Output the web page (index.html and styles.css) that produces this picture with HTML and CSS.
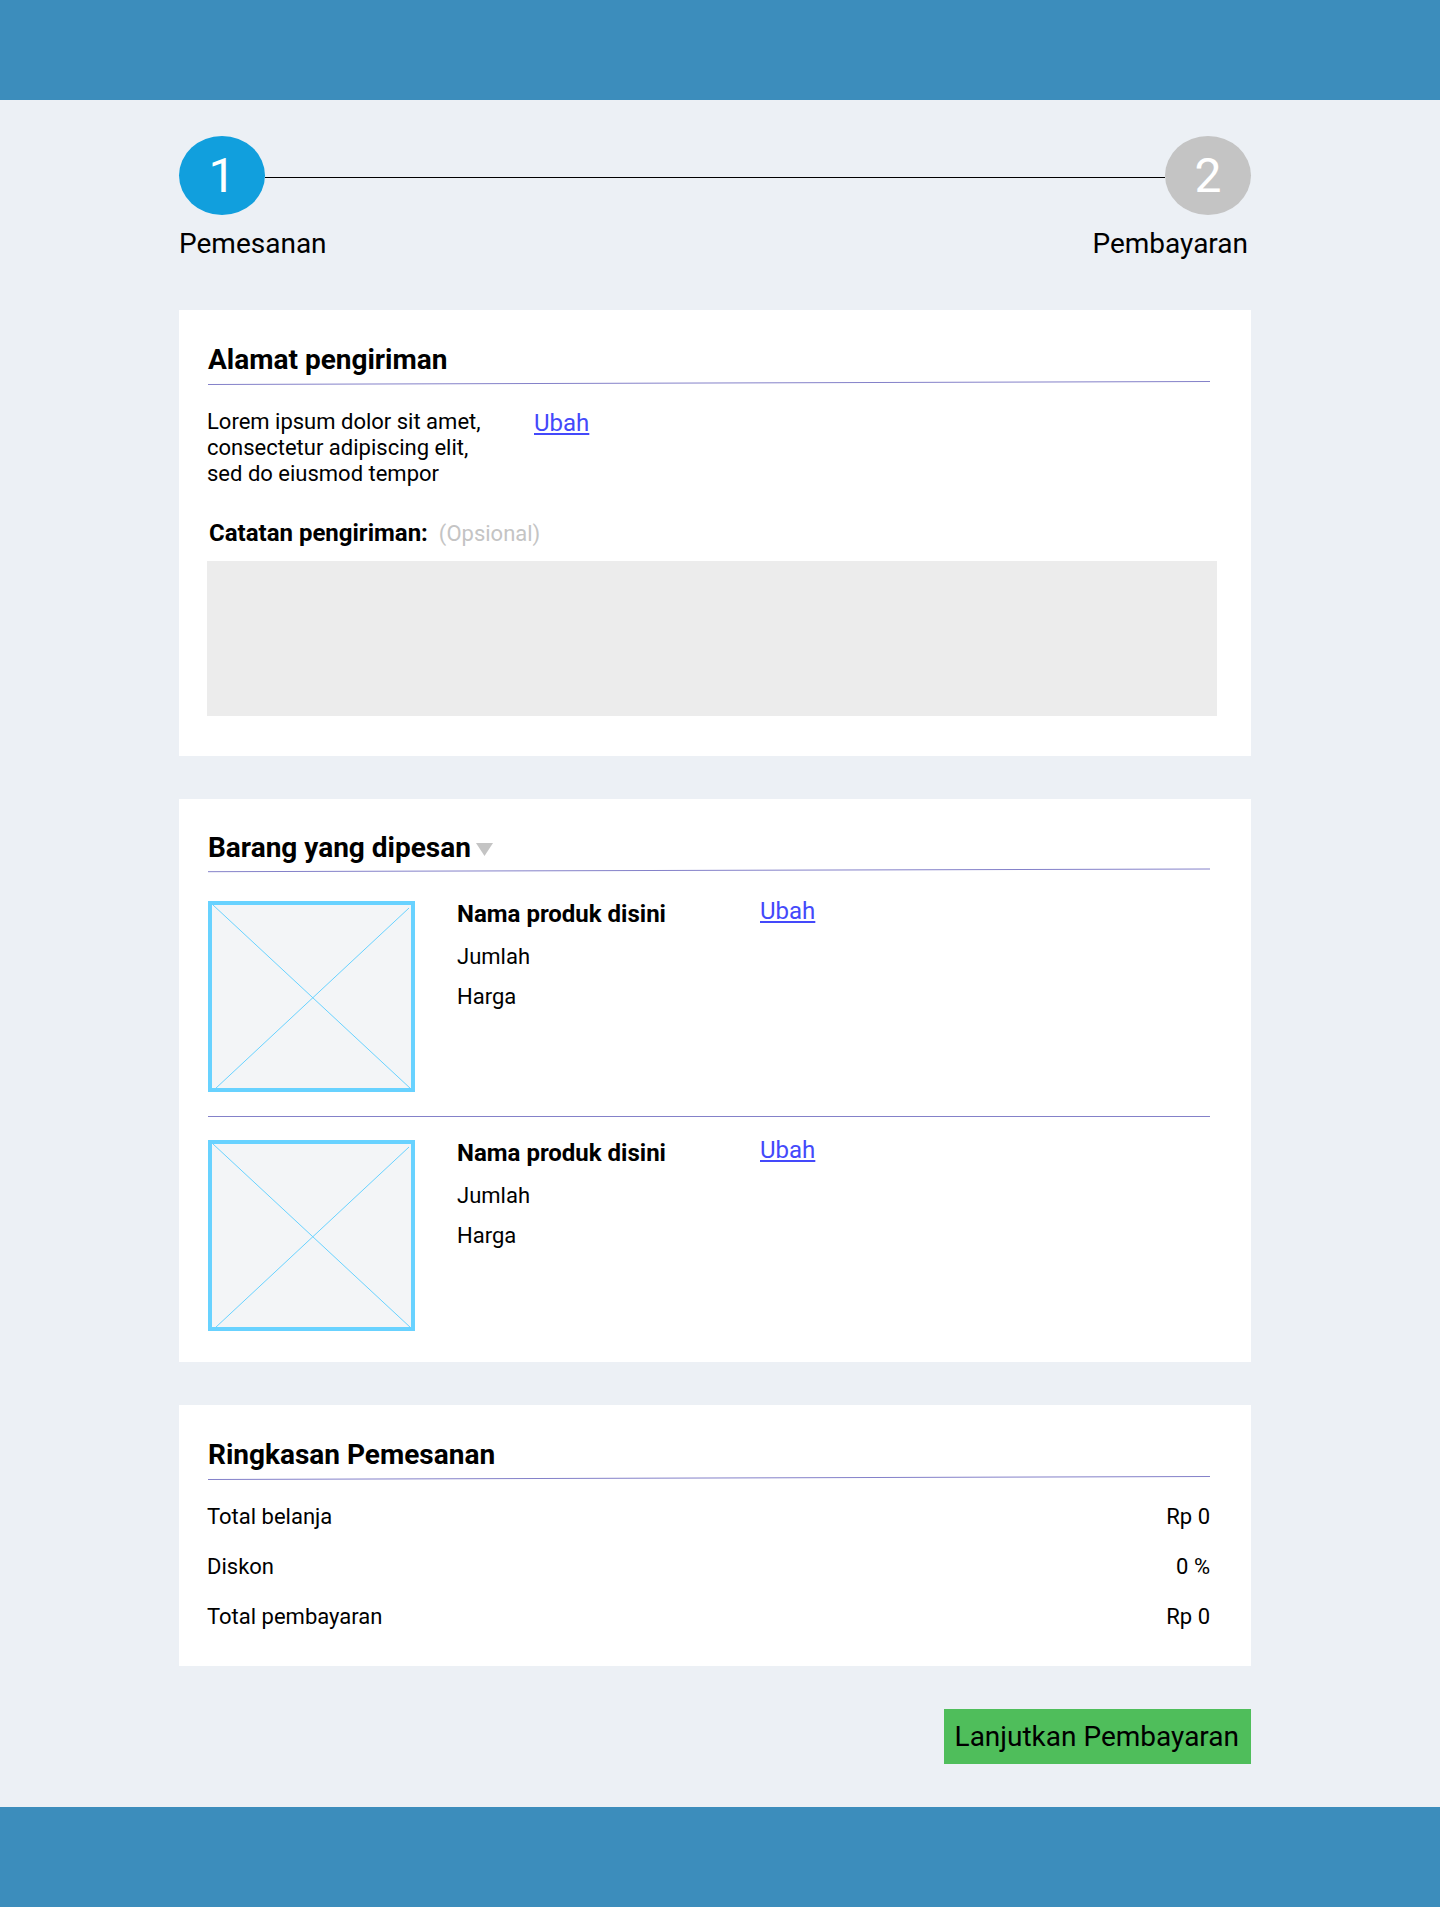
FILE: index.html
```html
<!DOCTYPE html>
<html lang="id">
<head>
  <meta charset="utf-8">
  <meta name="viewport" content="width=device-width, initial-scale=1">
  <title>Pemesanan</title>
  <link rel="stylesheet" href="styles.css">
</head>
<body>
  <header class="bar"></header>

  <main class="page">
    <ol class="stepper">
      <li class="step step-first">
        <div class="step-track">
          <span class="step-number step-active">1</span>
          <span class="step-line"></span>
        </div>
        <span class="step-label">Pemesanan</span>
      </li>
      <li class="step step-last">
        <div class="step-track">
          <span class="step-line"></span>
          <span class="step-number">2</span>
        </div>
        <span class="step-label">Pembayaran</span>
      </li>
    </ol>

    <section class="card card-address">
      <h2 class="card-title">Alamat pengiriman</h2>
      <svg class="rule" viewBox="0 0 1002 5" preserveAspectRatio="none" aria-hidden="true"><line x1="0" y1="4.5" x2="1002" y2="1.5"/></svg>
      <div class="address">
        <p class="address-text">Lorem ipsum dolor sit amet,<br>consectetur adipiscing elit,<br>sed do eiusmod tempor</p>
        <a class="edit" href="#alamat">Ubah</a>
      </div>
      <label class="note-label" for="catatan">Catatan pengiriman: <span class="note-hint">(Opsional)</span></label>
      <textarea class="note" id="catatan"></textarea>
    </section>

    <section class="card card-items">
      <h2 class="card-title">Barang yang dipesan
        <button class="toggle" type="button" aria-label="Tampilkan barang">
          <svg width="17" height="13" viewBox="0 0 17 13" aria-hidden="true"><path d="M0 0H17L8.5 13Z"/></svg>
        </button>
      </h2>
      <svg class="rule" viewBox="0 0 1002 5" preserveAspectRatio="none" aria-hidden="true"><line x1="0" y1="3.7" x2="1002" y2="1"/></svg>
      <ul class="items">
        <li class="item">
          <svg class="thumb" viewBox="0 0 207 191" aria-hidden="true"><rect x="2" y="2" width="203" height="187"/><path d="M5 4L203 188M201 7L7 188"/></svg>
          <div class="details">
            <h3 class="item-name">Nama produk disini</h3>
            <p>Jumlah</p>
            <p>Harga</p>
          </div>
          <a class="edit" href="#produk-1">Ubah</a>
        </li>
        <li class="item">
          <svg class="thumb" viewBox="0 0 207 191" aria-hidden="true"><rect x="2" y="2" width="203" height="187"/><path d="M5 4L203 188M201 7L7 188"/></svg>
          <div class="details">
            <h3 class="item-name">Nama produk disini</h3>
            <p>Jumlah</p>
            <p>Harga</p>
          </div>
          <a class="edit" href="#produk-2">Ubah</a>
        </li>
      </ul>
    </section>

    <section class="card card-summary">
      <h2 class="card-title">Ringkasan Pemesanan</h2>
      <svg class="rule" viewBox="0 0 1002 5" preserveAspectRatio="none" aria-hidden="true"><line x1="0" y1="4.5" x2="1002" y2="1.5"/></svg>
      <dl class="summary">
        <div class="summary-row"><dt>Total belanja</dt><dd>Rp 0</dd></div>
        <div class="summary-row"><dt>Diskon</dt><dd>0 %</dd></div>
        <div class="summary-row"><dt>Total pembayaran</dt><dd>Rp 0</dd></div>
      </dl>
    </section>

    <button class="submit" type="button">Lanjutkan Pembayaran</button>
  </main>

  <footer class="bar"></footer>
</body>
</html>
```
FILE: styles.css
```css
* {
  box-sizing: border-box;
}

body {
  margin: 0;
  background: #ecf0f5;
  color: #000;
  font-family: Roboto, "Liberation Sans", sans-serif;
  font-size: 22px;
  line-height: 26px;
}

h2, h3, p, ol, ul, dl, dd {
  margin: 0;
  padding: 0;
}

ol, ul {
  list-style: none;
}

.bar {
  height: 100px;
  background: #3c8dbc;
}

.page {
  display: flex;
  flex-direction: column;
  gap: 43px;
  padding: 36px 189px 43px 179px;
}

/* Progress steps */
.stepper {
  display: flex;
  margin-bottom: 7px;
}

.step-first {
  flex: 1;
}

.step-track {
  display: flex;
  align-items: center;
  margin-bottom: 12px;
}

.step-number {
  display: flex;
  align-items: center;
  justify-content: center;
  width: 86px;
  height: 79px;
  border-radius: 50%;
  background: #c4c4c4;
  color: #fff;
  font-size: 48px;
  line-height: 56px;
}

.step-active {
  background: #119fdd;
}

.step-line {
  flex: 1;
  height: 1px;
  margin-top: 4px;
  background: #000;
}

.step-label {
  display: block;
  font-size: 28px;
  line-height: 33px;
}

.step-last .step-label {
  padding-right: 3px;
}

/* Cards */
.card {
  padding: 33px 34px 40px 28px;
  background: #fff;
}

.card-items {
  padding-top: 32px;
  padding-bottom: 31px;
}

.card-summary {
  padding-bottom: 36px;
}

.card-title {
  display: flex;
  align-items: center;
  gap: 5px;
  padding-left: 1px;
  font-size: 28px;
  font-weight: 700;
  line-height: 33px;
}

.rule {
  display: block;
  width: calc(100% - 8px);
  height: 5px;
  margin: 4px 7px 24px 1px;
  stroke: #8481c9;
}

.edit {
  color: #4449fb;
  font-size: 24px;
  line-height: 28px;
}

/* Shipping address */
.address {
  display: flex;
  margin-bottom: 32px;
}

.address-text {
  width: 327px;
}

.note-label {
  display: flex;
  align-items: baseline;
  gap: 11px;
  margin-bottom: 13px;
  padding-left: 2px;
  font-size: 24px;
  font-weight: 700;
  line-height: 28px;
}

.note-hint {
  color: #c4c4c4;
  font-size: 22px;
  font-weight: 400;
}

.note {
  display: block;
  width: 100%;
  height: 155px;
  padding: 12px;
  border: 0;
  background: #ececec;
  font: inherit;
  resize: none;
}

/* Ordered items */
.toggle {
  display: flex;
  margin-top: 4px;
  padding: 0;
  border: 0;
  background: none;
  fill: #c4c4c4;
}

.items {
  margin: 28px 7px 0 1px;
}

.card-items .rule {
  margin-bottom: 0;
}

.item {
  display: flex;
}

.item + .item {
  margin-top: 24px;
  padding-top: 23px;
  border-top: 1px solid #8481c9;
}

.thumb {
  width: 207px;
  height: 191px;
  margin-right: 42px;
  stroke: #68d2ff;
}

.thumb rect {
  fill: #f3f5f7;
  stroke-width: 4;
}

.details {
  display: flex;
  flex-direction: column;
  gap: 14px;
  width: 303px;
}

.item-name {
  margin-bottom: 3px;
  font-size: 24px;
  font-weight: 700;
}

.item .edit {
  line-height: 20px;
}

/* Order summary */
.summary {
  display: flex;
  flex-direction: column;
  gap: 24px;
  padding-right: 7px;
}

.summary-row {
  display: flex;
  justify-content: space-between;
}

.submit {
  align-self: flex-end;
  height: 55px;
  padding: 0 12px 0 11px;
  border: 0;
  background: #4fbe5b;
  color: #000;
  font-family: inherit;
  font-size: 28px;
  line-height: 33px;
}

@media (max-width: 1000px) {
  .page {
    padding-right: 24px;
    padding-left: 24px;
  }
}
```
